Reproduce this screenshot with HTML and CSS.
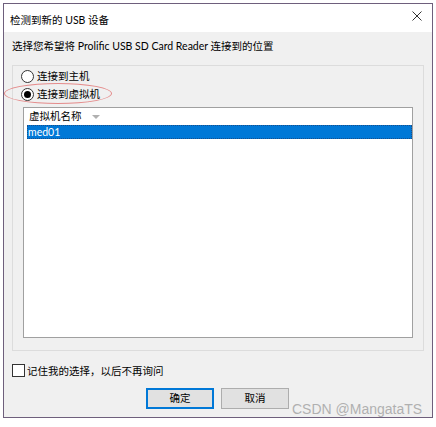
FILE: index.html
```html
<!DOCTYPE html>
<html lang="zh-CN">
<head>
<meta charset="utf-8">
<link rel="stylesheet" href="styles.css">
</head>
<body>
<div class="window">
  <div class="titlebar">
    <span class="title">检测到新的 USB 设备</span>
    <svg class="close" width="10" height="10" viewBox="0 0 10 10"><path d="M0.5 0.5 L9.5 9.5 M9.5 0.5 L0.5 9.5" stroke="#333" stroke-width="1" fill="none"/></svg>
  </div>
  <div class="content">
    <div class="prompt">选择您希望将 Prolific USB SD Card Reader 连接到的位置</div>
    <div class="group">
      <label class="radio"><span class="circle"></span>连接到主机</label>
      <label class="radio"><span class="circle checked"></span>连接到虚拟机</label>
      <div class="list">
        <div class="list-head">虚拟机名称<span class="sort"></span></div>
        <div class="row selected">med01</div>
      </div>
    </div>
    <label class="check"><span class="box"></span>记住我的选择，以后不再询问</label>
    <div class="buttons">
      <button class="btn primary">确定</button>
      <button class="btn">取消</button>
    </div>
  </div>
  <div class="ellipse"></div>
  <div class="watermark">CSDN @MangataTS</div>
</div>
</body>
</html>
```
FILE: styles.css
```css
*, *::before, *::after {
  box-sizing: border-box;
}
html, body {
  margin: 0;
  padding: 0;
  background: #ffffff;
}
body {
  font-family: "Lato", "Noto Sans CJK SC", "Microsoft YaHei", sans-serif;
  font-size: 10.5px;
  color: #000;
}
.window {
  position: relative;
  margin: 3px 0 0 3px;
  width: 430px;
  height: 415px;
  border: 1px solid #6e5f7c;
  background: #f0f0f0;
  display: flex;
  flex-direction: column;
}
.titlebar {
  height: 28px;
  background: #ffffff;
  display: flex;
  align-items: center;
  justify-content: space-between;
  padding: 0 10px 0 6px;
  flex: none;
}
.title {
  line-height: 14px;
  margin-top: 3px;
}
.close {
  display: block;
  margin-top: -4px;
}
.content {
  flex: 1;
  display: flex;
  flex-direction: column;
  padding: 0 8px 0 8px;
}
.prompt {
  margin-top: 6px;
  line-height: 16px;
  height: 16px;
}
.group {
  margin-top: 11px;
  height: 286px;
  flex: none;
  border: 1px solid #dcdcdc;
  display: flex;
  flex-direction: column;
  padding: 1px 10px 12px 10px;
}
.radio {
  display: flex;
  align-items: center;
  height: 18px;
  line-height: 18px;
  margin-left: -2px;
}
.circle {
  width: 13px;
  height: 13px;
  border: 1px solid #333;
  border-radius: 50%;
  background: #fff;
  margin-right: 3px;
  position: relative;
  flex: none;
}
.circle.checked::after {
  content: "";
  position: absolute;
  left: 2px;
  top: 2px;
  width: 7px;
  height: 7px;
  border-radius: 50%;
  background: #000;
}
.list {
  margin-top: 4px;
  flex: 1;
  background: #fff;
  border: 1px solid #a0a0a0;
  padding: 0 0 0 3px;
}
.list-head {
  height: 17px;
  line-height: 17px;
  padding-left: 2px;
  display: flex;
  align-items: center;
}
.sort {
  width: 0;
  height: 0;
  border-left: 4px solid transparent;
  border-right: 4px solid transparent;
  border-top: 4px solid #b0b0b0;
  margin-left: 10px;
  margin-top: 1px;
}
.row {
  height: 14px;
  line-height: 12px;
  padding-left: 0;
}
.row.selected {
  background: #0078d7;
  color: #fff;
  border: 1px dotted #1a4f8a;
}
.check {
  display: flex;
  align-items: center;
  margin-top: 13px;
  height: 13px;
}
.box {
  width: 13px;
  height: 13px;
  border: 1px solid #333;
  background: #fff;
  margin-right: 2px;
  flex: none;
}
.buttons {
  display: flex;
  justify-content: center;
  gap: 7px;
  margin-top: 11px;
  padding-right: 1px;
}
.btn {
  font-family: inherit;
  font-size: 10.5px;
  width: 68px;
  height: 21px;
  padding: 0;
  background: #e1e1e1;
  border: 1px solid #adadad;
  color: #000;
  line-height: 19px;
}
.btn.primary {
  border: 1px solid #0078d7;
  box-shadow: inset 0 0 0 1px #0078d7;
}
.ellipse {
  position: absolute;
  left: 0;
  top: 79px;
  width: 108px;
  height: 21px;
  border: 1px solid #e48b8b;
  border-radius: 50%;
}
.watermark {
  position: absolute;
  left: 288px;
  top: 397px;
  font-family: "Liberation Sans", Arial, sans-serif;
  font-size: 14px;
  line-height: 16px;
  color: #b0b0b0;
}
```
